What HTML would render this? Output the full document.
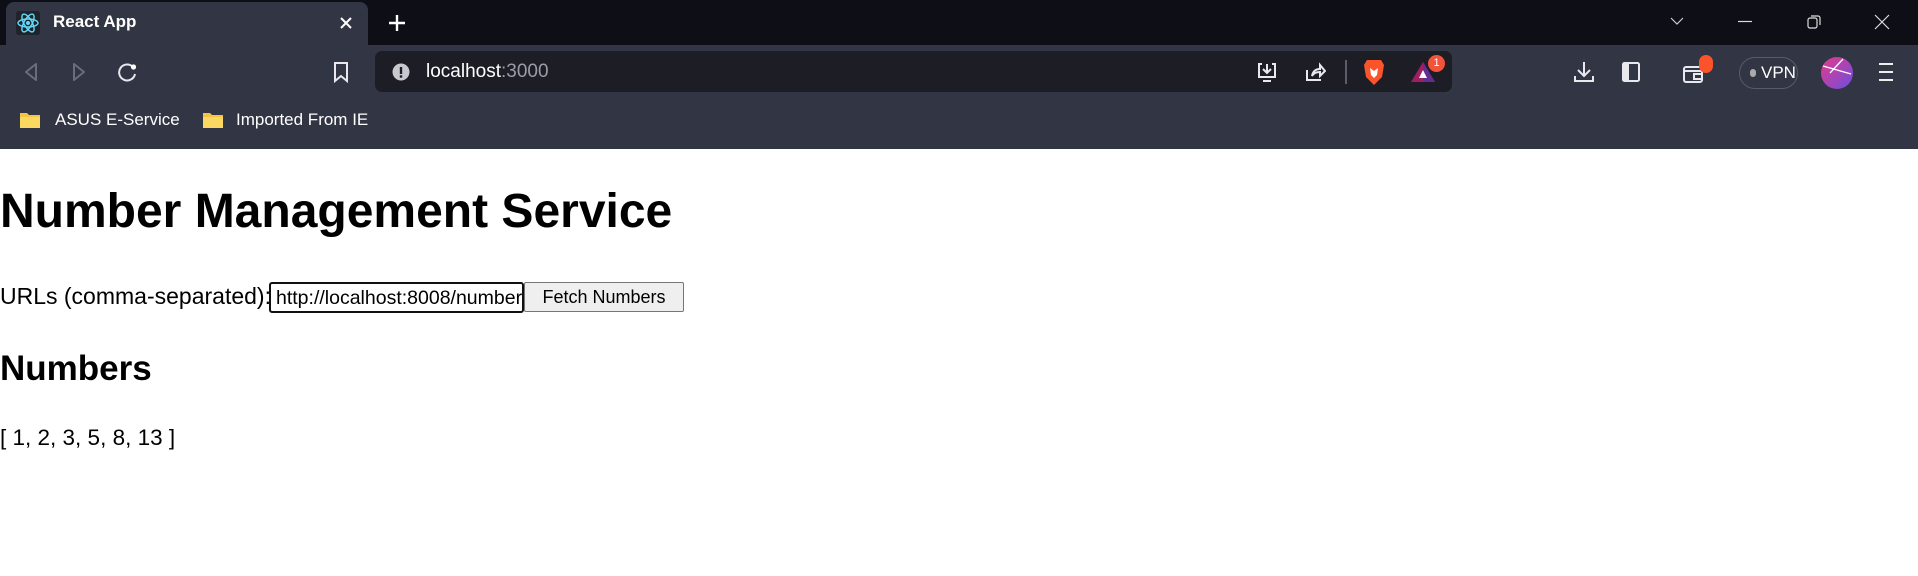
<!DOCTYPE html>
<html><head><meta charset="utf-8"><style>
*{margin:0;padding:0;box-sizing:border-box}
body{width:1918px;height:576px;overflow:hidden;background:#fff;font-family:"Liberation Sans",sans-serif;position:relative}
.a{position:absolute}
#tabs{left:0;top:0;width:1918px;height:45px;background:#0d0e16}
#tab{left:6px;top:2px;width:362px;height:45px;background:#323543;border-radius:8px 8px 0 0}
#tool{left:0;top:45px;width:1918px;height:104px;background:#323543}
#url{left:375px;top:51px;width:1077px;height:41px;background:#1d1e25;border-radius:7px}
.w{color:#fff}
.ic{stroke:#e8e8ee;fill:none;stroke-width:2}
</style></head><body>
<div id="tabs" class="a"></div>
<div id="tab" class="a"></div>
<div id="tool" class="a"></div>
<div class="a" style="left:16px;top:11px;width:24px;height:24px;background:#20232a;border-radius:3px"></div>
<svg class="a" style="left:16px;top:11px" width="24" height="24" viewBox="0 0 24 24"><g stroke="#61dafb" fill="none" stroke-width="1.4"><ellipse cx="12" cy="12" rx="10" ry="4"/><ellipse cx="12" cy="12" rx="10" ry="4" transform="rotate(60 12 12)"/><ellipse cx="12" cy="12" rx="10" ry="4" transform="rotate(120 12 12)"/></g><circle cx="12" cy="12" r="2" fill="#61dafb"/></svg>
<div class="a w" style="left:53px;top:12px;font-size:17px;font-weight:bold">React App</div>
<svg class="a" style="left:339px;top:16px" width="14" height="14"><path d="M2 2L12 12M12 2L2 12" stroke="#fff" stroke-width="2"/></svg>
<svg class="a" style="left:388px;top:14px" width="18" height="18"><path d="M9 1V17M1 9H17" stroke="#fff" stroke-width="2.4"/></svg>
<svg class="a" style="left:1670px;top:16px" width="14" height="10"><path d="M1 2L7 8L13 2" stroke="#ccc" fill="none" stroke-width="1.2"/></svg>
<svg class="a" style="left:1738px;top:20px" width="14" height="4"><path d="M0 1.5H14" stroke="#ddd" stroke-width="1.2"/></svg>
<svg class="a" style="left:1807px;top:14px" width="14" height="16"><rect x="1" y="4" width="9" height="10" rx="2" stroke="#ddd" fill="none" stroke-width="1.2"/><path d="M4 2H11a2 2 0 0 1 2 2V11" stroke="#ddd" fill="none" stroke-width="1.2"/></svg>
<svg class="a" style="left:1874px;top:14px" width="16" height="16"><path d="M1 1L15 15M15 1L1 15" stroke="#ddd" stroke-width="1.2"/></svg>
<svg class="a" style="left:22px;top:62px" width="18" height="20"><path d="M14 2L4 10L14 18Z" stroke="#6b6e7a" fill="none" stroke-width="2" stroke-linejoin="round"/></svg>
<svg class="a" style="left:70px;top:62px" width="18" height="20"><path d="M4 2L14 10L4 18Z" stroke="#6b6e7a" fill="none" stroke-width="2" stroke-linejoin="round"/></svg>
<svg class="a" style="left:116px;top:61px" width="22" height="22"><path d="M17 6A8 8 0 1 0 19 13" class="ic" stroke-width="2.2"/><circle cx="17.5" cy="6" r="2.6" fill="#fff"/></svg>
<svg class="a" style="left:333px;top:61px" width="16" height="22"><path d="M2 2H14V20L8 15L2 20Z" class="ic"/></svg>
<div id="url" class="a"></div>
<svg class="a" style="left:392px;top:63px" width="18" height="18"><circle cx="9" cy="9" r="8.5" fill="#c8c9ce"/><rect x="7.8" y="4" width="2.4" height="7" fill="#1d1e25"/><rect x="7.8" y="12.3" width="2.4" height="2.4" fill="#1d1e25"/></svg>
<div class="a" style="left:426px;top:61px;font-size:19px;color:#fff">localhost<span style="color:#9a9ca6">:3000</span></div>
<svg class="a" style="left:1256px;top:61px" width="22" height="22"><path d="M6 3H3V16H19V3H16M11 3V12M7 8L11 12L15 8M7 20H15" class="ic" stroke="#ccc"/></svg>
<svg class="a" style="left:1304px;top:61px" width="22" height="22"><path d="M3 9V19H17M8 15C9 10 12 8 16 8V4L21 10L16 15V11C12 11 10 12 8 15Z" class="ic" stroke="#ccc" stroke-width="1.6"/></svg>
<div class="a" style="left:1345px;top:60px;width:2px;height:24px;background:#5b5d68"></div>
<svg class="a" style="left:1363px;top:59px" width="22" height="27" viewBox="0 0 22 27"><path d="M4 1H18L21 6L19 18L11 26L3 18L1 6Z" fill="#fb542b"/><path d="M7 9L11 12L15 9L14 16L11 19L8 16Z" fill="#fff"/></svg>
<svg class="a" style="left:1410px;top:61px" width="26" height="22"><path d="M13 1L25 21H1Z" fill="#9e1f63"/><path d="M13 1L25 21H13Z" fill="#662d91"/><path d="M13 9L17 17H9Z" fill="#fff"/></svg>
<div class="a" style="left:1428px;top:55px;width:17px;height:17px;border-radius:50%;background:#f1533b;color:#fff;font-size:11px;text-align:center;line-height:17px">1</div>
<svg class="a" style="left:1573px;top:61px" width="22" height="22"><path d="M11 1V15M5 9L11 15L17 9M2 15V20H20V15" class="ic"/></svg>
<svg class="a" style="left:1622px;top:62px" width="18" height="20"><rect x="1" y="1" width="16" height="18" rx="1.5" class="ic"/><rect x="1" y="1" width="6" height="18" fill="#e8e8ee"/></svg>
<svg class="a" style="left:1682px;top:62px" width="24" height="22"><rect x="2" y="5" width="18" height="15" rx="2" class="ic"/><path d="M2 9H20" class="ic"/><rect x="12" y="12" width="8" height="5" class="ic"/></svg>
<div class="a" style="left:1699px;top:55px;width:14px;height:18px;border-radius:7px;background:#fb542b"></div>
<div class="a" style="left:1739px;top:57px;width:59px;height:32px;border:1.5px solid #585b68;border-radius:16px"></div>
<div class="a" style="left:1750px;top:69px;width:6px;height:8px;border-radius:3px;background:#aaa"></div>
<div class="a" style="left:1761px;top:63px;font-size:17px;color:#fff">VPN</div>
<svg class="a" style="left:1819px;top:56px" width="36" height="34"><defs><linearGradient id="g" x1="0" y1="0" x2="1" y2="1"><stop offset="0" stop-color="#e8398a"/><stop offset="1" stop-color="#6b4fe0"/></linearGradient></defs><ellipse cx="18" cy="17" rx="16" ry="16" fill="url(#g)"/><path d="M4 10L32 18M24 3L11 17" stroke="#fff" stroke-width="1.3"/></svg>
<svg class="a" style="left:1878px;top:62px" width="16" height="20"><path d="M1 2H15M1 10H15M1 18H15" stroke="#eee" stroke-width="2"/></svg>
<svg class="a" style="left:19px;top:111px" width="22" height="18"><path d="M1 2H8L10 4H21V17H1Z" fill="#f6c443"/><path d="M1 6H21V17H1Z" fill="#fbd862"/></svg>
<div class="a w" style="left:55px;top:110px;font-size:17px">ASUS E-Service</div>
<svg class="a" style="left:202px;top:111px" width="22" height="18"><path d="M1 2H8L10 4H21V17H1Z" fill="#f6c443"/><path d="M1 6H21V17H1Z" fill="#fbd862"/></svg>
<div class="a w" style="left:236px;top:110px;font-size:17px">Imported From IE</div>

<div class="a" style="left:0;top:184px;font-size:48px;font-weight:bold;color:#000;white-space:nowrap">Number Management Service</div>
<div class="a" style="left:0;top:283px;font-size:23px;white-space:nowrap;width:269px;overflow:hidden">URLs (comma-separated):</div>
<div class="a" style="left:269px;top:282px;width:255px;height:31px;border:2px solid #111;border-radius:3px;font-size:19.5px;padding:3px 5px;white-space:nowrap;overflow:hidden">http://localhost:8008/numbers</div>
<div class="a" style="left:524px;top:282px;width:160px;height:30px;border:1px solid #767676;border-radius:2px;background:#efefef;font-size:18px;text-align:center;line-height:28px">Fetch Numbers</div>
<div class="a" style="left:0;top:349px;font-size:35px;font-weight:bold">Numbers</div>
<div class="a" style="left:0;top:425px;font-size:22.5px">[ 1, 2, 3, 5, 8, 13 ]</div>
</body></html>
